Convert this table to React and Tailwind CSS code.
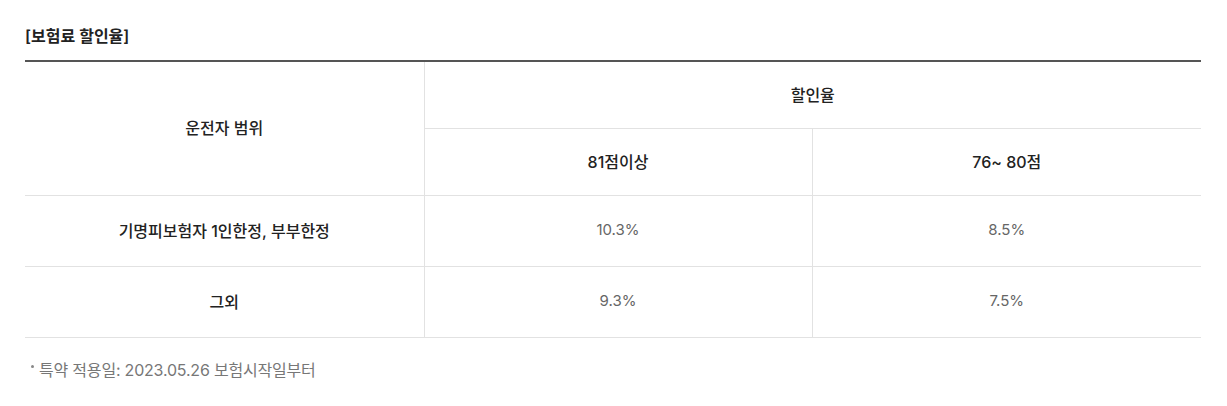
export default function App() {
  const font = { fontFamily: 'Inter, "Noto Sans CJK KR", sans-serif' };
  const th = "text-[16px] font-medium text-[#222]";
  return (
    <div className="w-[1227px] h-[406px] bg-white px-[25px] pt-[25px]" style={font}>
      <h3 className="text-[16px] leading-[22px] font-semibold text-[#222]">[보험료 할인율]</h3>
      <table className="mt-[13px] w-[1176px] border-collapse border-t-2 border-t-[#555] table-fixed">
        <colgroup>
          <col className="w-[399px]" />
          <col className="w-[388px]" />
          <col className="w-[389px]" />
        </colgroup>
        <thead>
          <tr className="h-[67px]">
            <th rowSpan={2} className={`border-b border-[#e2e2e2] ${th}`}>운전자 범위</th>
            <th colSpan={2} className={`border-b border-l border-[#e2e2e2] ${th}`}>할인율</th>
          </tr>
          <tr className="h-[67px]">
            <th className={`border-b border-l border-[#e2e2e2] ${th}`}>81점이상</th>
            <th className={`border-b border-l border-[#e2e2e2] ${th}`}>76~ 80점</th>
          </tr>
        </thead>
        <tbody>
          <tr className="h-[71px]">
            <td className={`border-b border-[#e2e2e2] text-center ${th}`}>기명피보험자 1인한정, 부부한정</td>
            <td className="border-b border-l border-[#e2e2e2] text-center text-[15px] text-[#666]">10.3%</td>
            <td className="border-b border-l border-[#e2e2e2] text-center text-[15px] text-[#666]">8.5%</td>
          </tr>
          <tr className="h-[71px]">
            <td className={`border-b border-[#e2e2e2] text-center ${th}`}>그외</td>
            <td className="border-b border-l border-[#e2e2e2] text-center text-[15px] text-[#666]">9.3%</td>
            <td className="border-b border-l border-[#e2e2e2] text-center text-[15px] text-[#666]">7.5%</td>
          </tr>
        </tbody>
      </table>
      <p className="mt-[21px] flex items-center text-[16px] leading-[22px] text-[#777] tracking-[-0.2px]">
        <span className="ml-[6px] mr-[5px] mb-[6px] inline-block w-[3px] h-[3px] rounded-full bg-[#888]"></span>
        특약 적용일: 2023.05.26 보험시작일부터
      </p>
    </div>
  );
}
